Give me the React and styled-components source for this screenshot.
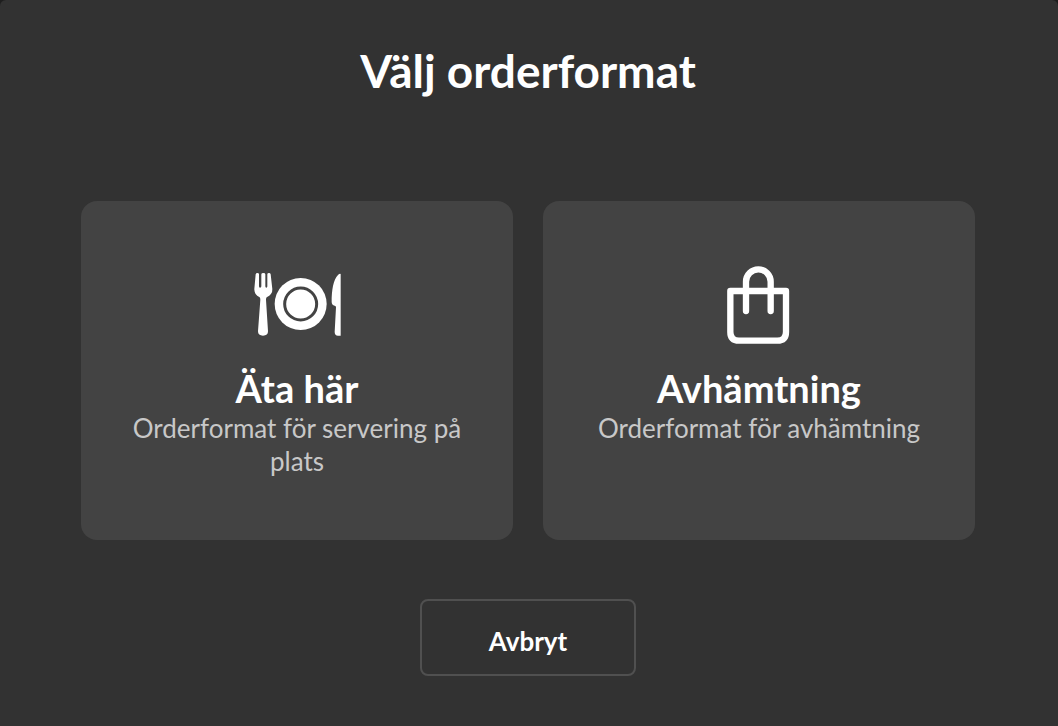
import React from "react";
import styled, { createGlobalStyle } from "styled-components";

function DineInIcon() {
  return (
    <svg width="88" height="84" viewBox="39 9 264 252" fill="#fff" aria-hidden="true">
      <path d="M47 43Q48 39 52 39Q57 39 57 43V79Q57 83 60 83Q64 83 64 79V43Q64 39 70 39Q76 39 76 43V79Q76 83 79 83Q82 83 82 79V43Q82 39 87 39Q91 39 92 43L97 87Q98 103 80 112Q78 114 78 119L84 214Q84 227 69 227Q54 227 54 214L61 119Q61 114 59 112Q42 103 43 87Z" />
      <circle cx="182" cy="132" r="78" />
      <circle cx="182" cy="132" r="48" fill="none" stroke="#434343" strokeWidth="9" />
      <path d="M302 42V227H294Q284 227 284 216L288 142Q288 138 284 137Q275 135 275 126C275 91 280 59 294 45Q299 40 302 42Z" />
    </svg>
  );
}

function TakeawayIcon() {
  return (
    <svg
      width="84"
      height="84"
      viewBox="21 24 252 252"
      fill="none"
      stroke="#fff"
      strokeWidth="19"
      strokeLinecap="round"
      strokeLinejoin="round"
      aria-hidden="true"
    >
      <path d="M61 108H228V231Q228 257 202 257H87Q61 257 61 231Z" />
      <path d="M108 168V80A37 37 0 0 1 182 80V168" />
    </svg>
  );
}

const options = [
  {
    id: "dine-in",
    title: "Äta här",
    description: "Orderformat för servering på plats",
    Icon: DineInIcon,
  },
  {
    id: "takeaway",
    title: "Avhämtning",
    description: "Orderformat för avhämtning",
    Icon: TakeawayIcon,
  },
];

function App() {
  return (
    <>
      <GlobalStyle />
      <Dialog role="dialog" aria-labelledby="dialog-title">
        <Title id="dialog-title">Välj orderformat</Title>
        <Options>
          {options.map(({ id, title, description, Icon }) => (
            <OptionCard key={id} type="button">
              <Icon />
              <OptionTitle>{title}</OptionTitle>
              <OptionText>{description}</OptionText>
            </OptionCard>
          ))}
        </Options>
        <CancelButton type="button">Avbryt</CancelButton>
      </Dialog>
    </>
  );
}

export default App;

const GlobalStyle = createGlobalStyle`
  * {
    box-sizing: border-box;
  }

  body {
    margin: 0;
    background-color: #1e1e1e;
    color: #fff;
    font-family: Lato, "Liberation Sans", sans-serif;
  }
`;

const Dialog = styled.main`
  display: flex;
  flex-direction: column;
  align-items: center;
  min-height: 100vh;
  padding: 44px 83px 50px 81px;
  border-radius: 6px 6px 0 0;
  background-color: #323232;
`;

const Title = styled.h1`
  margin: 0 0 103px;
  font-size: 46px;
  font-weight: 700;
  line-height: 54px;
  text-align: center;
`;

const Options = styled.div`
  display: grid;
  grid-template-columns: 1fr 1fr;
  gap: 30px;
  width: 100%;
  margin-bottom: 59px;
`;

const OptionCard = styled.button`
  display: flex;
  flex-direction: column;
  align-items: center;
  padding: 62px 48px;
  border: none;
  border-radius: 16px;
  background-color: #434343;
  color: inherit;
  font-family: inherit;
  text-align: center;
  cursor: pointer;
`;

const OptionTitle = styled.span`
  margin: 18px 0 1px;
  font-size: 38px;
  font-weight: 700;
  line-height: 46px;
`;

const OptionText = styled.span`
  color: #c8c8c8;
  font-size: 26px;
  line-height: 33px;
`;

const CancelButton = styled.button`
  min-width: 216px;
  padding: 24px 32px 16px;
  border: 2px solid #505050;
  border-radius: 8px;
  background-color: transparent;
  color: inherit;
  font-family: inherit;
  font-size: 26px;
  font-weight: 700;
  line-height: 33px;
  cursor: pointer;
`;
